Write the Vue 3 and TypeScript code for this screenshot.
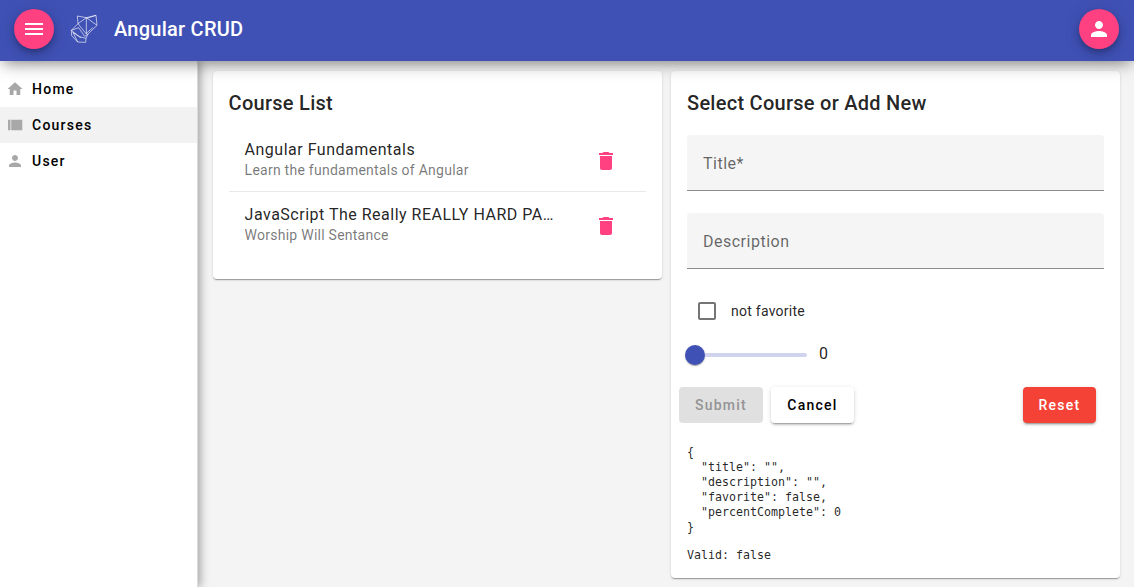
<script setup lang="ts">
import { computed, reactive, ref } from 'vue'

interface Course {
  title: string
  description: string
}

const links = [
  { label: 'Home', icon: 'M10 20v-6h4v6h5v-8h3L12 3 2 12h3v8z' },
  { label: 'Courses', icon: 'M2.7 5H6v14H2.7zM7 5h14.7v14H7z' },
  { label: 'User', icon: 'M12 12c2.21 0 4-1.79 4-4s-1.79-4-4-4-4 1.79-4 4 1.79 4 4 4zm0 2c-2.67 0-8 1.34-8 4v2h16v-2c0-2.66-5.33-4-8-4z' },
]
const active = ref('Courses')

const courses = ref<Course[]>([
  { title: 'Angular Fundamentals', description: 'Learn the fundamentals of Angular' },
  { title: 'JavaScript The Really REALLY HARD PA…', description: 'Worship Will Sentance' },
])

const form = reactive({ title: '', description: '', favorite: false, percentComplete: 0 })
const valid = computed(() => form.title.length > 0)
const json = computed(() => JSON.stringify(form, null, 2))

function reset() {
  Object.assign(form, { title: '', description: '', favorite: false, percentComplete: 0 })
}
</script>

<template>
  <div class="app">
    <header class="toolbar">
      <button class="fab" aria-label="Menu">
        <svg viewBox="0 0 24 24"><path d="M3 18h18v-2H3v2zm0-5h18v-2H3v2zm0-7v2h18V6H3z" /></svg>
      </button>
      <svg class="logo" viewBox="0 0 150 150">
        <path d="M52 33L79 38L108 31L111 61L84 87L78 100L77 112L53 111L35 92L34 76L54 56Z" />
        <path d="M54 56L79 38L111 61M79 38V88M108 31L80 40M54 56L78 86L98 68M34 76L58 95L78 100M39 82L53 111M34 76L56 68L74 94L84 87M38 82L63 98" />
      </svg>
      <span class="brand">Angular CRUD</span>
      <button class="fab account" aria-label="Account">
        <svg viewBox="0 0 24 24"><path :d="links[2].icon" /></svg>
      </button>
    </header>

    <div class="body">
      <nav class="sidenav">
        <a v-for="l in links" :key="l.label" class="link" :class="{ active: active === l.label }" @click="active = l.label">
          <svg viewBox="0 0 24 24"><path :d="l.icon" /></svg>
          <span>{{ l.label }}</span>
        </a>
      </nav>

      <main class="content">
        <section class="card courses">
          <h3>Course List</h3>
          <ul class="list">
            <li v-for="(c, i) in courses" :key="c.title">
              <div class="lines">
                <div class="primary">{{ c.title }}</div>
                <div class="secondary">{{ c.description }}</div>
              </div>
              <button class="delete" aria-label="Delete" @click="courses.splice(i, 1)">
                <svg viewBox="0 0 24 24"><path d="M6 19c0 1.1.9 2 2 2h8c1.1 0 2-.9 2-2V7H6v12zM19 4h-3.5l-1-1h-5l-1 1H5v2h14V4z" /></svg>
              </button>
            </li>
          </ul>
        </section>

        <section class="card">
          <h3>Select Course or Add New</h3>
          <div class="field">Title*</div>
          <div class="field">Description</div>
          <div class="check" @click="form.favorite = !form.favorite">
            <span class="box"></span>
            <span>{{ form.favorite ? 'favorite' : 'not favorite' }}</span>
          </div>
          <div class="slider">
            <span class="thumb"></span>
            <span class="track"></span>
            <span class="value">{{ form.percentComplete }}</span>
          </div>
          <div class="actions">
            <button class="btn submit" :disabled="!valid">Submit</button>
            <button class="btn cancel">Cancel</button>
            <button class="btn reset" @click="reset">Reset</button>
          </div>
          <pre class="json">{{ json }}</pre>
          <pre class="valid">Valid: {{ valid }}</pre>
        </section>
      </main>
    </div>
  </div>
</template>

<style>
html,
body {
  margin: 0;
  overflow: hidden;
}
</style>

<style scoped>
.app {
  width: 100%;
  height: 100vh;
  display: flex;
  flex-direction: column;
  background: #f4f4f4;
  color: rgba(0, 0, 0, 0.87);
  font-family: Roboto, "Liberation Sans", sans-serif;
  overflow: hidden;
}
.app * {
  box-sizing: border-box;
}
button {
  border: 0;
  padding: 0;
  font-family: inherit;
}
svg {
  fill: currentColor;
  display: block;
  flex: none;
}
.toolbar {
  position: relative;
  z-index: 2;
  height: 61px;
  flex: none;
  display: flex;
  align-items: center;
  padding: 0 15px 3px 14px;
  background: #3f51b5;
  color: #fff;
  box-shadow: 0 5px 15px -3px rgba(0, 0, 0, 0.5);
}
.fab {
  width: 40px;
  height: 40px;
  border-radius: 50%;
  background: #ff4081;
  color: #fff;
  display: grid;
  place-items: center;
  box-shadow: 0 3px 5px -1px rgba(0, 0, 0, 0.2), 0 6px 10px rgba(0, 0, 0, 0.14), 0 1px 18px rgba(0, 0, 0, 0.12);
}
.fab svg {
  width: 24px;
  height: 24px;
}
.account {
  margin-left: auto;
}
.logo {
  width: 50px;
  height: 50px;
  margin: 2px 4px 0 6px;
  fill: none;
  stroke: rgba(255, 255, 255, 0.72);
  stroke-width: 2.6;
}
.brand {
  font-size: 20px;
  font-weight: 500;
  letter-spacing: 0.25px;
}
.body {
  flex: 1;
  min-height: 0;
  display: flex;
}
.sidenav {
  position: relative;
  z-index: 1;
  width: 198px;
  flex: none;
  padding-top: 10px;
  background: #fff;
  border-right: 1px solid #dcdcdc;
  box-shadow: 2px 0 9px rgba(0, 0, 0, 0.36);
}
.link {
  height: 36px;
  padding-left: 6px;
  display: flex;
  align-items: center;
  gap: 8px;
  font-size: 14px;
  font-weight: 500;
  letter-spacing: 1.25px;
  color: #000;
}
.link.active {
  background: #f2f2f2;
}
.link svg {
  width: 18px;
  height: 18px;
  color: #a8a8a8;
}
.content {
  flex: 1;
  min-width: 0;
  display: grid;
  grid-template-columns: 449px 449px;
  column-gap: 9px;
  align-items: start;
  padding: 10px 0 0 15px;
}
.card {
  padding: 16px;
  background: #fff;
  border-radius: 4px;
  box-shadow: 0 2px 1px -1px rgba(0, 0, 0, 0.2), 0 1px 1px rgba(0, 0, 0, 0.14), 0 1px 3px rgba(0, 0, 0, 0.12);
}
.courses {
  padding-left: 15.6px;
}
h3 {
  margin: 0;
  font-size: 20px;
  line-height: 32px;
  font-weight: 500;
  letter-spacing: 0.27px;
}
.list {
  margin: 0;
  padding: 8px 0 7px;
  list-style: none;
}
li {
  height: 65px;
  display: flex;
  align-items: center;
  padding: 4px 28px 0 16px;
}
li:first-child {
  border-bottom: 1px solid #e8e8e8;
}
li:last-child {
  height: 64px;
}
.lines {
  width: 314px;
  padding-bottom: 3px;
}
.primary {
  font-size: 16px;
  line-height: 22px;
  letter-spacing: 0.5px;
  white-space: nowrap;
}
.secondary {
  font-size: 14px;
  line-height: 19px;
  letter-spacing: 0.25px;
  color: rgba(0, 0, 0, 0.54);
}
.delete {
  margin-left: auto;
  background: none;
  color: #ff4081;
}
.delete svg {
  width: 24px;
  height: 24px;
}
.field {
  height: 56px;
  margin: 16px 0 22px;
  padding: 1px 16px 0;
  line-height: 56px;
  background: #f5f5f5;
  border-bottom: 1px solid #8c8c8c;
  border-radius: 4px 4px 0 0;
  font-size: 16px;
  letter-spacing: 0.5px;
  color: rgba(0, 0, 0, 0.6);
}
.field + .field {
  margin-top: 0;
}
.check {
  height: 40px;
  padding-left: 11px;
  display: flex;
  align-items: center;
  gap: 15px;
  font-size: 14px;
  letter-spacing: 0.25px;
}
.box {
  width: 18px;
  height: 18px;
  border: 2px solid #757575;
  border-radius: 2px;
}
.slider {
  height: 48px;
  display: flex;
  align-items: center;
  margin-left: -2px;
}
.thumb {
  width: 20px;
  height: 20px;
  border-radius: 50%;
  background: #3f51b5;
  box-shadow: 0 2px 1px -1px rgba(0, 0, 0, 0.2), 0 1px 1px rgba(0, 0, 0, 0.14), 0 1px 3px rgba(0, 0, 0, 0.12);
}
.track {
  width: 102px;
  height: 4px;
  border-radius: 0 2px 2px 0;
  background: #cfd3ed;
}
.value {
  margin-left: 12px;
  padding-bottom: 4px;
  font-size: 16px;
}
.actions {
  display: flex;
  gap: 8px;
  margin: 8px 8px 0 -8px;
}
.btn {
  height: 36px;
  width: 84px;
  border-radius: 4px;
  font-size: 14px;
  font-weight: 500;
  letter-spacing: 1.25px;
  box-shadow: 0 3px 1px -2px rgba(0, 0, 0, 0.2), 0 2px 2px rgba(0, 0, 0, 0.14), 0 1px 5px rgba(0, 0, 0, 0.12);
}
.submit {
  background: #e0e0e0;
  color: #949494;
  box-shadow: none;
}
.cancel {
  width: 83px;
  background: #fff;
  color: #000;
}
.reset {
  width: 73px;
  margin-left: auto;
  background: #f44336;
  color: #fff;
}
pre {
  margin: 0;
  font-family: "DejaVu Sans Mono", monospace;
  font-size: 11.63px;
  line-height: 15px;
}
.json {
  margin-top: 22px;
}
.valid {
  margin: 13px 0 -1px;
}
</style>
